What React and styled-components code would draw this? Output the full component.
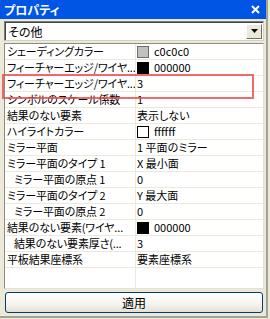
import styled, { createGlobalStyle } from 'styled-components'

const GlobalStyle = createGlobalStyle`
    html, body {
        margin: 0;
        padding: 0;
        background: #ECE9D8;
    }
    body {
        font-family: "Noto Sans CJK JP", "Liberation Sans", sans-serif;
        font-size: 11px;
        font-feature-settings: "palt";
    }
`

const Window = styled.div`
    position: relative;
    width: 268px;
    height: 318px;
    box-sizing: border-box;
    background: #ECE9D8;
    border-right: 2px solid #A5A293;
    border-bottom: 2px solid #A5A293;
    display: flex;
    flex-direction: column;
`

const TitleBar = styled.div`
    height: 19px;
    background: #0055E5;
    color: #fff;
    display: flex;
    align-items: center;
    justify-content: space-between;
    padding: 0 6px 0 4px;
    font-weight: bold;
    font-size: 12px;
    line-height: 19px;
`

const Content = styled.div`
    flex: 1;
    display: flex;
    flex-direction: column;
    padding: 2px 2px 3px 4px;
`

const Select = styled.div`
    height: 20px;
    box-sizing: border-box;
    background: #fff;
    border-top: 1px solid #7F7F7F;
    border-left: 1px solid #7F7F7F;
    border-right: 1px solid #D4D0C8;
    border-bottom: 1px solid #D4D0C8;
    box-shadow: inset 1px 1px 0 #404040;
    display: flex;
    align-items: center;
    justify-content: space-between;
    padding: 0 1px 0 3px;
    line-height: 15px;
    font-size: 12px;
`

const SelectButton = styled.div`
    width: 16px;
    height: 15px;
    box-sizing: border-box;
    background: #ECE9D8;
    border-top: 1px solid #fff;
    border-left: 1px solid #fff;
    border-right: 1px solid #716F64;
    border-bottom: 1px solid #716F64;
    display: flex;
    align-items: center;
    justify-content: center;
`

const Grid = styled.div`
    margin-top: 2px;
    height: 246px;
    box-sizing: border-box;
    background: #fff;
    border-top: 1px solid #8E8C82;
    border-left: 1px solid #8E8C82;
    border-right: 1px solid #E4E2D8;
    border-bottom: 1px solid #E4E2D8;
    display: flex;
    flex-direction: column;
`

const Row = styled.div`
    display: grid;
    grid-template-columns: 131px 1fr;
    height: 16px;
    box-sizing: border-box;
    border-bottom: 1px solid #ECE9D8;
    line-height: 15px;
    color: #000;
`

const Filler = styled.div`
    flex: 1;
    display: grid;
    grid-template-columns: 131px 1fr;
`

const NameCell = styled.div`
    padding-left: ${({ $indent }) => ($indent ? 9 : 2)}px;
    border-right: 1px solid #ECE9D8;
    white-space: nowrap;
    overflow: hidden;
    letter-spacing: -0.15px;
`

const ValueCell = styled.div`
    padding-left: 1px;
    display: flex;
    align-items: center;
    gap: 5px;
    white-space: nowrap;
    overflow: hidden;
`

const Swatch = styled.span`
    width: 12px;
    height: 12px;
    box-sizing: border-box;
    background: ${({ $color }) => $color};
    border: 1px solid ${({ $border }) => $border || '#000'};
    flex-shrink: 0;
`

const ApplyButton = styled.button`
    margin-top: 3px;
    height: 21px;
    box-sizing: border-box;
    border: 1px solid #003C74;
    border-radius: 3px;
    background: linear-gradient(#FFFFFF, #F4F3EE 60%, #E3E1D6);
    font-family: inherit;
    font-size: 12px;
    font-feature-settings: "palt";
    color: #000;
    padding: 0;
    margin-right: 1px;
    margin-left: 1px;
`

const Highlight = styled.div`
    position: absolute;
    left: 2px;
    top: 74px;
    width: 252px;
    height: 25px;
    box-sizing: border-box;
    border: 2px solid rgba(238, 70, 70, 0.8);
    pointer-events: none;
`

const rows = [
    { name: 'シェーディングカラー', value: 'c0c0c0', swatch: '#C0C0C0', border: '#6E6E6E' },
    { name: 'フィーチャーエッジ/ワイヤ...', value: '000000', swatch: '#000' },
    { name: 'フィーチャーエッジ/ワイヤ...', value: '3' },
    { name: 'シンボルのスケール係数', value: '1' },
    { name: '結果のない要素', value: '表示しない' },
    { name: 'ハイライトカラー', value: 'ffffff', swatch: '#fff' },
    { name: 'ミラー平面', value: '1 平面のミラー' },
    { name: 'ミラー平面のタイプ 1', value: 'X 最小面' },
    { name: 'ミラー平面の原点 1', value: '0', indent: true },
    { name: 'ミラー平面のタイプ 2', value: 'Y 最大面' },
    { name: 'ミラー平面の原点 2', value: '0', indent: true },
    { name: '結果のない要素(ワイヤ...', value: '000000', swatch: '#000' },
    { name: '結果のない要素厚さ(...', value: '3', indent: true },
    { name: '平板結果座標系', value: '要素座標系' },
]

function App() {
    return (
        <>
            <GlobalStyle />
            <Window>
                <TitleBar>
                    <span>プロパティ</span>
                    <svg width="9" height="9" viewBox="0 0 9 9">
                        <path d="M1 1 L8 8 M8 1 L1 8" stroke="#fff" strokeWidth="2" />
                    </svg>
                </TitleBar>
                <Content>
                    <Select>
                        <span>その他</span>
                        <SelectButton>
                            <svg width="7" height="4" viewBox="0 0 7 4">
                                <path d="M0 0 H7 L3.5 4 Z" fill="#000" />
                            </svg>
                        </SelectButton>
                    </Select>
                    <Grid>
                        {rows.map((r, i) => (
                            <Row key={i}>
                                <NameCell $indent={r.indent}>{r.name}</NameCell>
                                <ValueCell>
                                    {r.swatch && <Swatch $color={r.swatch} $border={r.border} />}
                                    <span>{r.value}</span>
                                </ValueCell>
                            </Row>
                        ))}
                        <Filler>
                            <NameCell />
                            <ValueCell />
                        </Filler>
                    </Grid>
                    <ApplyButton>適用</ApplyButton>
                </Content>
                <Highlight />
            </Window>
        </>
    )
}

export default App
